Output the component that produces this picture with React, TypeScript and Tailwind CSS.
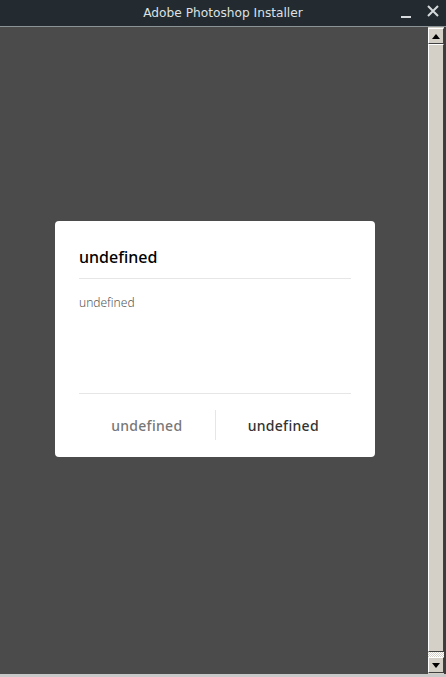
import React from "react";

function ScrollButton({ dir }: { dir: "up" | "down" }) {
  return (
    <div className="flex h-[16px] w-[16px] items-center justify-center border border-t-white border-l-white border-r-[#404040] border-b-[#404040] bg-[#d4d0c8]">
      <svg width="8" height="5" viewBox="0 0 8 5">
        {dir === "up" ? <path d="M4 0 L8 5 L0 5 Z" fill="#000" /> : <path d="M0 0 L8 0 L4 5 Z" fill="#000" />}
      </svg>
    </div>
  );
}

export default function App() {
  return (
    <div className="flex h-[677px] w-[446px] flex-col overflow-hidden bg-[#232b30] font-['Noto_Sans',sans-serif]">
      {/* title bar */}
      <div className="relative flex h-[27px] items-center justify-center border-b border-[#8c9396]">
        <span className="font-['DejaVu_Sans',sans-serif] text-[12.2px] text-[#dde1e3]">Adobe Photoshop Installer</span>
        <div className="absolute right-[7px] top-[4px] flex items-center gap-[16px]">
          <span className="mt-[12px] block h-[2px] w-[10px] bg-[#d6dadc]" />
          <svg width="12" height="12" viewBox="0 0 12 12">
            <path d="M1 1 L11 11 M11 1 L1 11" stroke="#d6dadc" strokeWidth="2" />
          </svg>
        </div>
      </div>

      <div className="flex flex-1">
        {/* main area */}
        <div className="flex flex-1 flex-col items-center bg-[#4b4b4b] pt-[194px] pl-[2px]">
          <div className="w-[320px] rounded-[4px] bg-white px-6">
            <div className="border-b border-[#e6e6e6] pt-6 pb-[9px] text-[16px] leading-6 font-medium text-black">undefined</div>
            <div className="h-[115px] border-b border-[#e6e6e6] pt-[15px] text-[12px] leading-[18px] font-light text-[#555]">undefined</div>
            <div className="flex pt-4 pb-[17px]">
              <div className="flex h-[30px] flex-1 items-center justify-center text-[14px] font-medium tracking-[0.3px] text-[#777]">undefined</div>
              <div className="w-px bg-[#e6e6e6]" />
              <div className="flex h-[30px] flex-1 items-center justify-center text-[14px] font-medium tracking-[0.3px] text-[#333]">undefined</div>
            </div>
          </div>
        </div>

        {/* scrollbar */}
        <div className="flex w-[18px] flex-col border-r-2 border-[#3c3c3c] bg-[#d4d0c8] pt-[1px]">
          <ScrollButton dir="up" />
          <div className="flex-1 border border-t-white border-l-white border-r-[#404040] border-b-[#404040] bg-[#d4d0c8]" />
          <div className="h-[5px] bg-[repeating-conic-gradient(#ffffff_0_25%,#d4d0c8_0_50%)] bg-[length:2px_2px]" />
          <ScrollButton dir="down" />
          <div className="h-[1px]" />
        </div>
      </div>
      <div className="h-[3px] bg-[#c9c9c9]" />
    </div>
  );
}
